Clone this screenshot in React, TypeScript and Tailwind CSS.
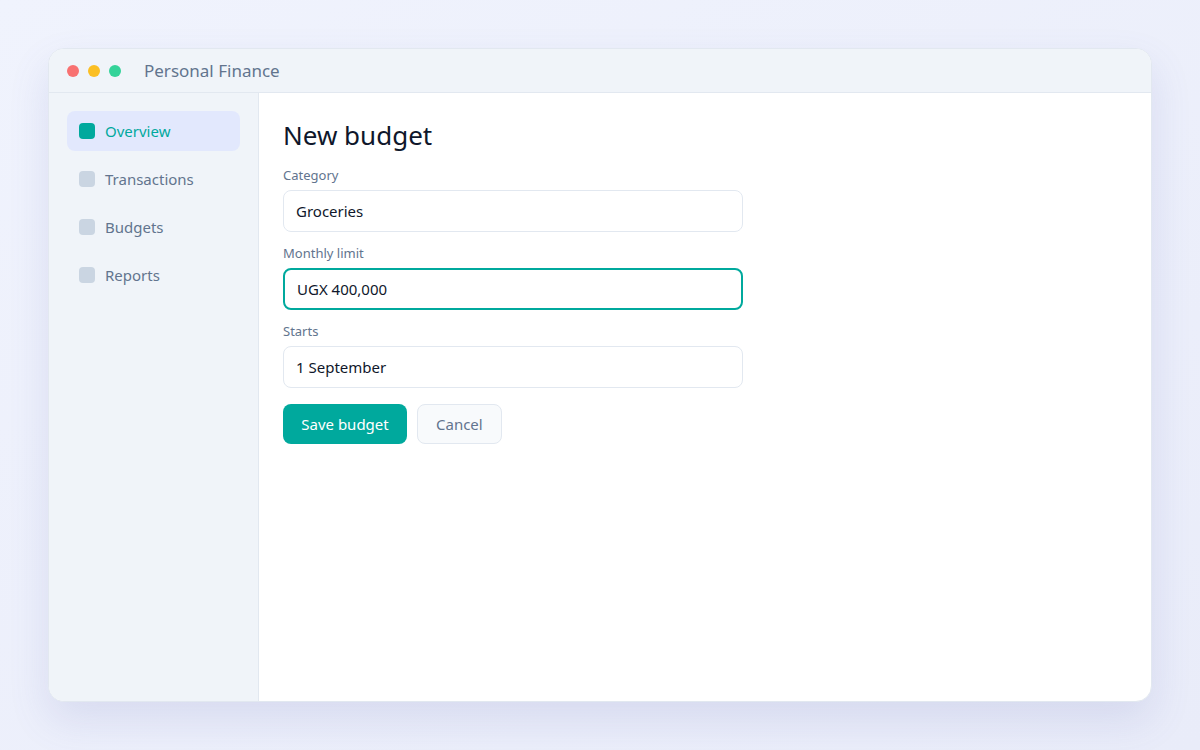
import { useState } from "react";

// ── Sidebar nav ───────────────────────────────────────────────────────────────

const navItems = ["Overview", "Transactions", "Budgets", "Reports"];

function NavItem({ label, active }: { label: string; active: boolean }) {
  return (
    <div
      className={`flex items-center gap-[10px] h-10 px-3 rounded-lg text-[15px] ${
        active ? "bg-[#e2e8fd] text-[#00a99d]" : "text-slate-500"
      }`}
    >
      <span className={`w-4 h-4 rounded ${active ? "bg-[#00a99d]" : "bg-slate-300"}`} />
      {label}
    </div>
  );
}

// ── Form field ────────────────────────────────────────────────────────────────

function Field({
  label, value, focused, onChange,
}: {
  label: string;
  value: string;
  focused?: boolean;
  onChange: (v: string) => void;
}) {
  return (
    <div className="flex flex-col gap-[6px]">
      <label className="text-[13px] leading-[18px] text-slate-500">{label}</label>
      <input
        value={value}
        onChange={(e) => onChange(e.target.value)}
        className={`w-[460px] h-[42px] rounded-lg bg-white text-[15px] text-slate-900 outline-none ${
          focused ? "border-2 border-[#00a99d] px-[12px]" : "border border-slate-200 px-3"
        }`}
      />
    </div>
  );
}

export default function App() {
  const [category, setCategory] = useState("Groceries");
  const [limit, setLimit] = useState("UGX 400,000");
  const [starts, setStarts] = useState("1 September");

  return (
    <div
      className="min-h-screen w-full bg-gradient-to-br from-[#f0f3fd] to-[#e9ecf9] p-12"
      style={{ fontFamily: '"Noto Sans", "Open Sans", sans-serif' }}
    >
      <div className="h-[654px] flex flex-col rounded-2xl border border-slate-200 bg-white overflow-hidden shadow-[0_18px_40px_rgba(90,100,180,0.14)]">
        {/* Title bar */}
        <div className="h-11 flex-shrink-0 flex items-center gap-[9px] px-[18px] bg-[#f0f4f9] border-b border-slate-200">
          <span className="w-3 h-3 rounded-full bg-[#f87171]" />
          <span className="w-3 h-3 rounded-full bg-[#fbbf24]" />
          <span className="w-3 h-3 rounded-full bg-[#34d399]" />
          <span className="ml-[14px] text-[17px] text-slate-500">Personal Finance</span>
        </div>

        <div className="flex flex-1 min-h-0">
          {/* Sidebar */}
          <aside className="w-[210px] flex-shrink-0 bg-[#f0f4f9] border-r border-slate-200 p-[18px] flex flex-col gap-2">
            {navItems.map((n, i) => (
              <NavItem key={n} label={n} active={i === 0} />
            ))}
          </aside>

          {/* Main */}
          <main className="flex-1 px-6 pt-[24px]">
            <h1 className="text-[26px] leading-[36px] text-slate-900 mb-[13px]">New budget</h1>
            <div className="flex flex-col gap-3">
              <Field label="Category" value={category} onChange={setCategory} />
              <Field label="Monthly limit" value={limit} focused onChange={setLimit} />
              <Field label="Starts" value={starts} onChange={setStarts} />
            </div>
            <div className="flex items-center gap-[10px] mt-4">
              <button className="h-10 w-[124px] flex items-center justify-center rounded-lg bg-[#00a99d] text-white text-[15px]">
                Save budget
              </button>
              <button className="h-10 px-[18px] rounded-lg bg-slate-50 border border-slate-200 text-slate-500 text-[15px]">
                Cancel
              </button>
            </div>
          </main>
        </div>
      </div>
    </div>
  );
}
